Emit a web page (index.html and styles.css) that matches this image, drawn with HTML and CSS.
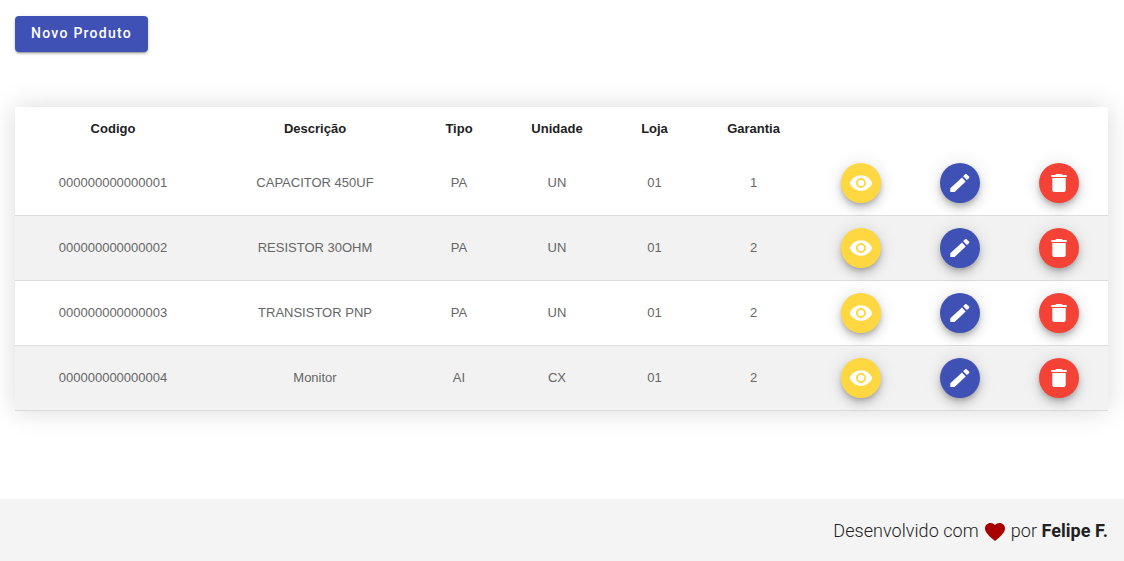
FILE: index.html
```html
<!DOCTYPE html>
<html lang="pt-BR">
<head>
<meta charset="utf-8">
<title>Produtos</title>
<link rel="stylesheet" href="styles.css">
</head>
<body>
<svg class="sprite" aria-hidden="true">
  <symbol id="eye" viewBox="0 0 24 24"><path d="M12 4.200C7 4.200 2.500 7.400.7 12c1.800 4.600 6.300 7.800 11.300 7.800s9.500-3.200 11.300-7.800C21.500 7.400 17 4.200 12 4.200zM12 17c-2.760 0-5-2.240-5-5s2.240-5 5-5 5 2.240 5 5-2.240 5-5 5zm0-8.200c-1.760 0-3.200 1.440-3.200 3.200s1.440 3.200 3.200 3.200 3.200-1.440 3.200-3.200-1.440-3.200-3.200-3.200z"/></symbol>
  <symbol id="pencil" viewBox="0 0 24 24"><path d="M2.300 17.250V21h4.300L17.700 10.500l-3.700-3.900L2.300 17.250zM21 7.200c.5-.5.5-1.100.1-1.600l-2.300-2.200c-.5-.5-1.200-.5-1.700-.1l-2 1.850 3.800 3.800L21 7.200z"/></symbol>
  <symbol id="trash" viewBox="0 0 24 24"><path d="M5.300 19c0 1.100.9 2 2 2h9.400c1.100 0 2-.9 2-2V7H5.300v12zM19.700 4h-3.900l-1.100-1H9.300L8.200 4H4.300v2h15.400V4z"/></symbol>
</svg>
<main class="content">
  <button class="new-button">Novo Produto</button>
  <table class="products">
    <colgroup><col class="c-code"><col class="c-desc"><col class="c-type"><col class="c-unit"><col class="c-store"><col class="c-warranty"><col class="c-view"><col class="c-edit"><col class="c-delete"></colgroup>
    <thead>
      <tr><th>Codigo</th><th>Descrição</th><th>Tipo</th><th>Unidade</th><th>Loja</th><th>Garantia</th><th></th><th></th><th></th></tr>
    </thead>
    <tbody>
      <tr><td>000000000000001</td><td>CAPACITOR 450UF</td><td>PA</td><td>UN</td><td>01</td><td>1</td>
        <td class="action"><button class="fab view"><svg><use href="#eye"/></svg></button></td><td class="action"><button class="fab edit"><svg><use href="#pencil"/></svg></button></td><td class="action last"><button class="fab delete"><svg><use href="#trash"/></svg></button></td></tr>
      <tr><td>000000000000002</td><td>RESISTOR 30OHM</td><td>PA</td><td>UN</td><td>01</td><td>2</td>
        <td class="action"><button class="fab view"><svg><use href="#eye"/></svg></button></td><td class="action"><button class="fab edit"><svg><use href="#pencil"/></svg></button></td><td class="action last"><button class="fab delete"><svg><use href="#trash"/></svg></button></td></tr>
      <tr><td>000000000000003</td><td>TRANSISTOR PNP</td><td>PA</td><td>UN</td><td>01</td><td>2</td>
        <td class="action"><button class="fab view"><svg><use href="#eye"/></svg></button></td><td class="action"><button class="fab edit"><svg><use href="#pencil"/></svg></button></td><td class="action last"><button class="fab delete"><svg><use href="#trash"/></svg></button></td></tr>
      <tr><td>000000000000004</td><td>Monitor</td><td>AI</td><td>CX</td><td>01</td><td>2</td>
        <td class="action"><button class="fab view"><svg><use href="#eye"/></svg></button></td><td class="action"><button class="fab edit"><svg><use href="#pencil"/></svg></button></td><td class="action last"><button class="fab delete"><svg><use href="#trash"/></svg></button></td></tr>
    </tbody>
  </table>
</main>
<footer class="footer">
  <span>Desenvolvido com</span>
  <svg class="heart" viewBox="2 3 20 18.350" preserveAspectRatio="none"><path d="M12 21.350l-1.450-1.320C5.400 15.360 2 12.280 2 8.500 2 5.420 4.420 3 7.500 3c1.740 0 3.410.81 4.500 2.090C13.090 3.810 14.760 3 16.500 3 19.580 3 22 5.420 22 8.500c0 3.780-3.400 6.860-8.550 11.540L12 21.350z"/></svg>
  <span>por <strong>Felipe F.</strong></span>
</footer>
</body>
</html>
```
FILE: styles.css
```css
* { box-sizing: border-box; }
body {
  margin: 0;
  height: 561px;
  display: flex;
  flex-direction: column;
  overflow: hidden;
  background: #fff;
  font-family: "Liberation Sans", Arial, sans-serif;
}
.sprite { display: none; }
.content { flex: 1; padding: 16px 16px 0 15px; }
.new-button {
  display: block;
  width: 133px;
  height: 36px;
  padding: 0 0 2px;
  border: 0;
  border-radius: 4px;
  background: #3f51b5;
  color: #fff;
  font: 500 14px Roboto, sans-serif;
  letter-spacing: 1.25px;
  white-space: nowrap;
  box-shadow: 0 3px 1px -2px rgba(0,0,0,.2), 0 2px 2px rgba(0,0,0,.14), 0 1px 5px rgba(0,0,0,.12);
}
.products {
  width: 1093px;
  margin-top: 55px;
  table-layout: fixed;
  border-spacing: 0;
  background: #fff;
  font-size: 13px;
  line-height: 15px;
  text-align: center;
  box-shadow: 0 0 25px rgba(0,0,0,.15);
}
.c-code { width: 196px; }
.c-desc { width: 208px; }
.c-type { width: 80px; }
.c-unit { width: 116px; }
.c-store { width: 79px; }
.c-warranty { width: 119px; }
.c-view { width: 96px; }
.c-edit { width: 102px; }
.c-delete { width: 97px; }
.products th { height: 44px; padding: 0 0 2px; color: #212121; font-weight: bold; }
.products td {
  height: 65px;
  padding: 0 0 2px;
  border-bottom: 1px solid #dcdcdc;
  color: #666;
}
.products .action { padding: 0; }
.products .last { padding-right: 1px; }
.products tbody tr:nth-child(even) { background: #f2f2f2; }
.fab {
  display: flex;
  align-items: center;
  justify-content: center;
  width: 40px;
  height: 40px;
  margin: 0 auto;
  padding: 0;
  border: 0;
  border-radius: 50%;
  box-shadow: 0 3px 5px -1px rgba(0,0,0,.2), 0 6px 10px rgba(0,0,0,.14), 0 1px 18px rgba(0,0,0,.12);
}
.fab svg { width: 24px; height: 24px; fill: #fff; }
.view { background: #ffd740; }
.edit { background: #3f51b5; }
.delete { background: #f44336; }
.footer {
  display: flex;
  align-items: center;
  justify-content: flex-end;
  gap: 6px;
  height: 62px;
  padding: 0 16px 0 0;
  background: #f4f4f4;
  color: #212121;
  font: 300 18px Roboto, sans-serif;
  letter-spacing: .05px;
}
.footer strong { font-weight: 700; }
.heart { width: 20px; height: 18px; fill: #a80000; margin-top: 4px; }
```
